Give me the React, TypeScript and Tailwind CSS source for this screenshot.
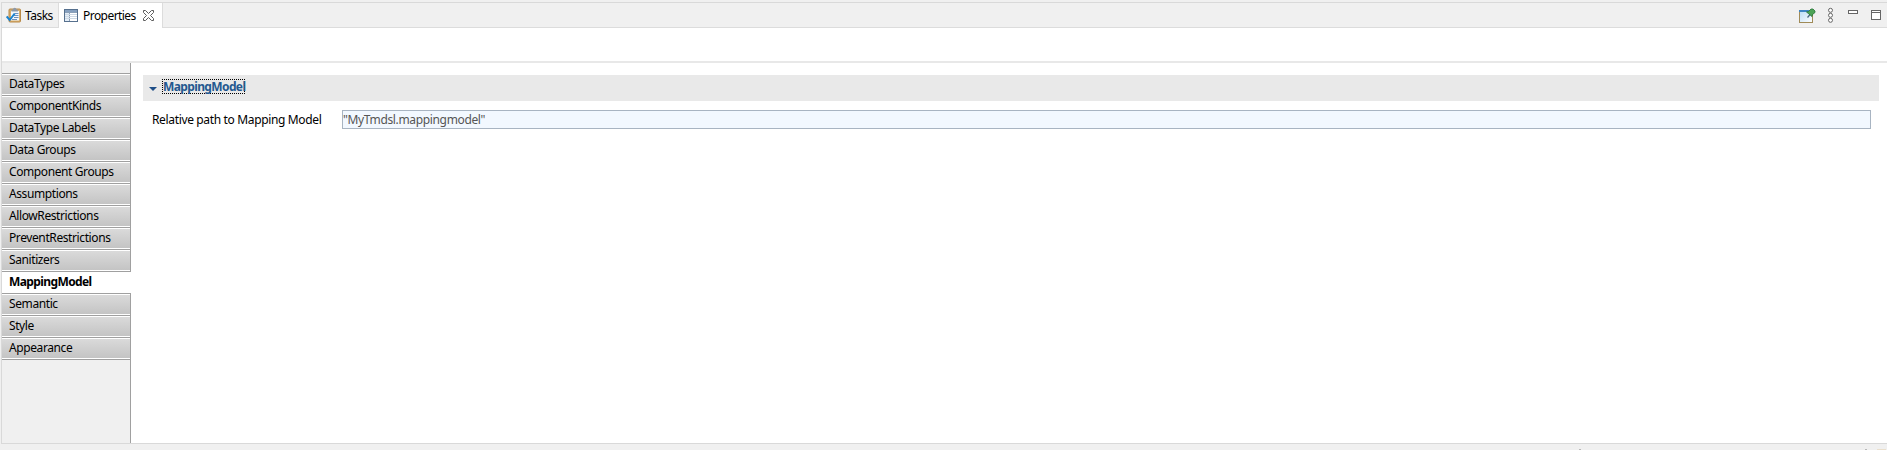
const items = ['DataTypes', 'ComponentKinds', 'DataType Labels', 'Data Groups', 'Component Groups', 'Assumptions', 'AllowRestrictions', 'PreventRestrictions', 'Sanitizers', 'MappingModel', 'Semantic', 'Style', 'Appearance'];

function TasksIcon() {
  return (
    <svg width="16" height="16" viewBox="0 0 16 16" className="shrink-0">
      <rect x="3" y="2" width="11.500" height="13" rx="1" fill="#d9ae6c" stroke="#b98a48" />
      <rect x="5" y="4" width="8" height="9.5" fill="#f2f7fc" />
      <path d="M5.500 4.500V2.500H7a1.700 1.700 0 0 1 3.400 0h1.500v2z" fill="#8d99a8" />
      <path d="M8.500 6.500h4M8 8.500h4.500M8 10.500h4.500M6 12.500h5" stroke="#6c8fbd" />
      <path d="M0.700 9.500l3 3.500 5-6.500" fill="none" stroke="#1882cf" strokeWidth="2" />
    </svg>
  );
}

function PropertiesIcon() {
  return (
    <svg width="14" height="13" viewBox="0 0 14 13" className="shrink-0" shapeRendering="crispEdges">
      <rect x=".5" y=".5" width="13" height="12" fill="#fff" stroke="#56708e" />
      <rect x="1" y="1" width="12" height="2" fill="#86a0bf" />
      <rect x="1" y="4" width="4" height="8" fill="#e3edf7" />
      <path d="M1 3.500h12M5.500 4v8" stroke="#8ba0b8" />
      <path d="M1 5.500h12M1 7.500h12M1 9.500h12" stroke="#cdd8e4" />
    </svg>
  );
}

function CloseIcon() {
  return (
    <svg width="11" height="11" viewBox="0 0 11 11" className="shrink-0" fill="#fff" stroke="#5c5c5c">
      <path d="M.5 .5h2l3 3 3-3h2v2l-3 3 3 3v2h-2l-3-3-3 3h-2v-2l3-3-3-3z" />
    </svg>
  );
}

function Toolbar() {
  return (
    <div className="ml-auto mr-[2px] flex">
      <svg width="88" height="24" viewBox="1797 3 88 24" className="block">
        <defs>
          <linearGradient id="pane" x1="0" y1="0" x2="1" y2="1">
            <stop offset="0" stopColor="#b9dcf6" />
            <stop offset="1" stopColor="#ffffff" />
          </linearGradient>
        </defs>
        <rect x="1799.500" y="10.500" width="13" height="12" fill="url(#pane)" stroke="#a08b58" />
        <path d="M1799 10h10v2h-10z" fill="#3f86c4" />
        <path d="M1807.500 17.500l3-3.500" stroke="#47687c" strokeWidth="1.200" />
        <path d="M1806.500 12l2-.5 2.500-2.500h2l2 2v1.500l-2.500 2-.5 2z" fill="#4da457" stroke="#267337" strokeWidth=".8" />
        <g fill="#fff" stroke="#666">
          <circle cx="1830.500" cy="10.300" r="2" />
          <circle cx="1830.500" cy="15.300" r="2" />
          <circle cx="1830.500" cy="20.300" r="2" />
          <rect x="1848.500" y="10.500" width="9" height="3" />
          <rect x="1871.500" y="10.500" width="9" height="9" />
          <path d="M1871 12.500h10" />
        </g>
      </svg>
    </div>
  );
}

export default function App() {
  return (
    <div className="flex h-[450px] w-full flex-col bg-[#f0f0f0] pl-px pt-[2px] font-['Noto_Sans','Open_Sans',sans-serif] text-[12px] leading-[16px] tracking-[-0.4px] text-black">
      <div className="flex h-[442px] shrink-0 flex-col border-y border-l border-[#d9d9d9] bg-white">
        <div className="flex h-[25px] shrink-0 bg-[#f0f0f0]">
          <div className="flex w-[57px] items-center border-b border-r border-[#dcdcdc] pl-[4px]">
            <TasksIcon />
            <span className="ml-[3px] pt-px tracking-[-0.5px]">Tasks</span>
          </div>
          <div className="flex w-[104px] items-center border-r border-[#dcdcdc] bg-white pl-[5px]">
            <PropertiesIcon />
            <span className="ml-[5px] w-[60px] whitespace-nowrap pt-px tracking-[-0.55px]">Properties</span>
            <CloseIcon />
          </div>
          <div className="flex grow border-b border-[#dcdcdc]"><Toolbar /></div>
        </div>
        <div className="h-[35px] shrink-0 border-b-2 border-[#e8e8e8]" />
        <div className="flex grow">
          <nav className="flex w-[129px] shrink-0 flex-col bg-[#f0f0f0]">
            <div className="h-[10px] border-r border-[#a0a0a0]" />
            {items.map((item) =>
              item === 'MappingModel' ? (
                <div key={item} className="h-[22px] border-t border-[#a0a0a0] bg-white pl-[7px] pt-[2px] font-bold tracking-[-0.6px]">{item}</div>
              ) : (
                <div key={item} className="h-[22px] border-r border-t border-[#a0a0a0] bg-white py-px">
                  <div className="h-[19px] bg-linear-to-b from-[#dadada] to-[#c4c4c4] pl-[7px] pt-px">{item}</div>
                </div>
              ),
            )}
            <div className="grow border-r border-t border-[#a0a0a0]" />
          </nav>
          <main className="grow pl-[12px] pr-[8px] pt-[12px]">
            <div className="flex h-[26px] items-start bg-[#e9e9e9] pl-[6px] pt-[4px]">
              <svg width="8" height="4" viewBox="0 0 8 4" className="mt-[8px]"><path d="M0 0h8L4 4z" fill="#1f4e87" /></svg>
              <div className="ml-[5px] h-[15px] w-[83px] border border-dotted border-black font-bold leading-[14px] tracking-[-0.62px] text-[#24588f]">MappingModel</div>
            </div>
            <div className="mt-[9px] flex h-[19px] pl-[9px] pr-[8px]">
              <label className="w-[190px] pt-[2px] tracking-[-0.35px]">Relative path to Mapping Model</label>
              <div className="grow border border-[#a8b4c2] bg-[#f2f8ff] pt-px tracking-[-0.35px] text-[#555]">"MyTmdsl.mappingmodel"</div>
            </div>
          </main>
        </div>
      </div>
      <div className="flex grow items-end bg-[#f0f0f0]">
        <div className="ml-[1578px] h-px w-[2px] bg-[#b8b8b8]" />
        <div className="ml-[284px] h-px w-[2px] bg-[#b8b8b8]" />
        <div className="ml-[10px] h-px w-[9px] bg-[#eadfcd]" />
      </div>
    </div>
  );
}
